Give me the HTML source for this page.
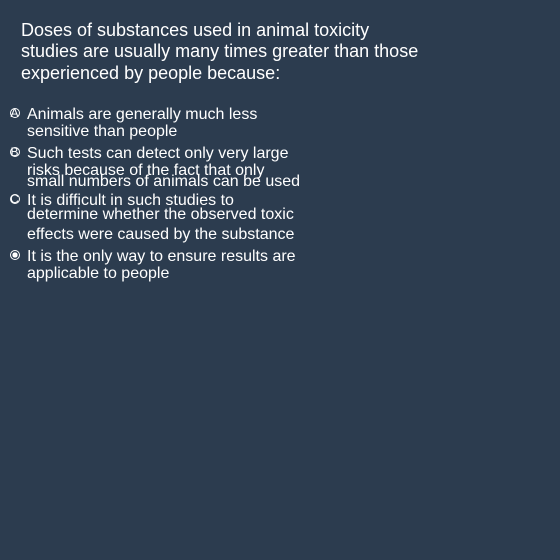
<!DOCTYPE html>
<html><head><style>
html,body{margin:0;padding:0;width:560px;height:560px;background:#2c3c4f;overflow:hidden}
body{position:relative;font-family:"Liberation Sans",Arial,sans-serif;color:#fff}
.t{position:absolute;left:21px;font-size:18px;line-height:20px;white-space:nowrap}
.o{position:absolute;left:27px;font-size:16px;line-height:18px;white-space:nowrap}
.r{position:absolute;left:10px;width:8px;height:8px;border:1.5px solid #fff;border-radius:50%;font-size:12px;line-height:9px;text-align:center;text-indent:-1px}
</style></head><body>
<div class="t" style="top:20px">Doses of substances used in animal toxicity</div>
<div class="t" style="top:41px">studies are usually many times greater than those</div>
<div class="t" style="top:63px">experienced by people because:</div>

<div class="r" style="top:108px">A</div>
<div class="o" style="top:106px">Animals are generally much less</div>
<div class="o" style="top:123px">sensitive than people</div>

<div class="r" style="top:147px">B</div>
<div class="o" style="top:145px">Such tests can detect only very large</div>
<div class="o" style="top:162px">risks because of the fact that only</div>
<div class="o" style="top:173px">small numbers of animals can be used</div>

<div class="r" style="top:194px">C</div>
<div class="o" style="top:192px">It is difficult in such studies to</div>
<div class="o" style="top:206px">determine whether the observed toxic</div>
<div class="o" style="top:226px">effects were caused by the substance</div>

<div class="r" style="top:250px;background:radial-gradient(circle,#fff 45%,transparent 50%)"></div>
<div class="o" style="top:248px">It is the only way to ensure results are</div>
<div class="o" style="top:265px">applicable to people</div>
</body></html>
